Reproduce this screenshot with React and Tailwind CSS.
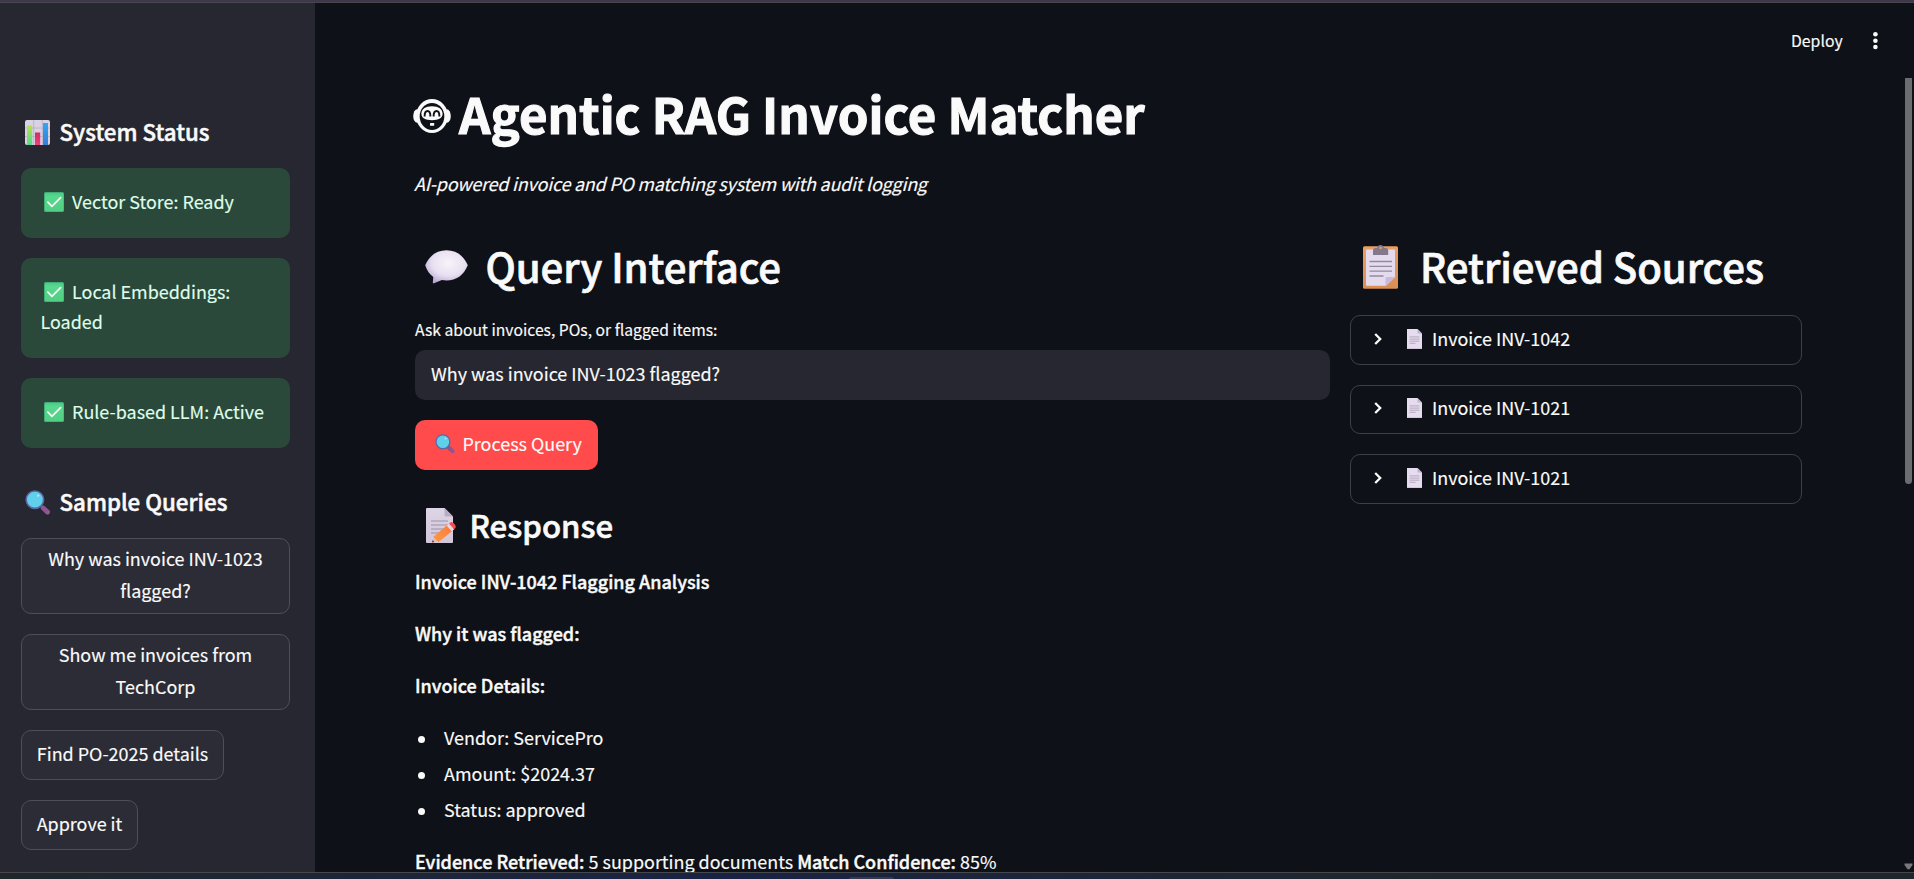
import React from "react";

function Gradients() {
  return (
    <svg className="absolute h-0 w-0" aria-hidden="true">
      <defs>
        <linearGradient id="barGreen" x1="0" y1="0" x2="0" y2="1">
          <stop offset="0" stopColor="#b6e34c" />
          <stop offset="1" stopColor="#54d98c" />
        </linearGradient>
        <linearGradient id="barPink" x1="0" y1="0" x2="0" y2="1">
          <stop offset="0" stopColor="#cf2f63" />
          <stop offset="1" stopColor="#f03e7c" />
        </linearGradient>
        <linearGradient id="barBlue" x1="0" y1="0" x2="0" y2="1">
          <stop offset="0" stopColor="#2fa8f4" />
          <stop offset="1" stopColor="#3a7bd5" />
        </linearGradient>
        <linearGradient id="checkBg" x1="0" y1="0" x2="0" y2="1">
          <stop offset="0" stopColor="#4fc98a" />
          <stop offset="0.2" stopColor="#57d98c" />
          <stop offset="1" stopColor="#52cf84" />
        </linearGradient>
        <linearGradient id="handle" x1="0" y1="0" x2="1" y2="1">
          <stop offset="0" stopColor="#6d4a8c" />
          <stop offset="1" stopColor="#a0609c" />
        </linearGradient>
        <radialGradient id="bubble" cx="0.55" cy="0.38" r="0.65">
          <stop offset="0" stopColor="#f8f3fa" />
          <stop offset="0.6" stopColor="#e8e0f1" />
          <stop offset="1" stopColor="#b9a8d6" />
        </radialGradient>
        <linearGradient id="paper" x1="0" y1="0" x2="0" y2="1">
          <stop offset="0" stopColor="#ddd5e6" />
          <stop offset="1" stopColor="#d3c6da" />
        </linearGradient>
        <linearGradient id="pencil" x1="1" y1="0" x2="0" y2="1">
          <stop offset="0" stopColor="#ff7a3c" />
          <stop offset="1" stopColor="#f99a45" />
        </linearGradient>
        <linearGradient id="board" x1="0" y1="0" x2="0" y2="1">
          <stop offset="0" stopColor="#e9a063" />
          <stop offset="1" stopColor="#da8f56" />
        </linearGradient>
      </defs>
    </svg>
  );
}

function ChartIcon() {
  return (
    <svg viewBox="0 0 25 25" className="mr-[9.5px] ml-1 inline h-[25px] w-[25px] align-[-4px]">
      <rect width="25" height="25" rx="2" fill="#d9d2e2" />
      <path d="M8.7 0v25M17.3 0v25M0 8h25M0 16.5h25" stroke="#b9b0c6" strokeWidth="0.9" />
      <rect x="2" y="5.5" width="5.2" height="19.5" fill="url(#barGreen)" />
      <rect x="10" y="12.5" width="5.2" height="12.5" fill="url(#barPink)" />
      <rect x="18" y="3" width="5" height="22" fill="url(#barBlue)" />
    </svg>
  );
}

function CheckIcon() {
  return (
    <svg viewBox="0 0 20 20" className="mr-2 ml-[3.5px] inline h-5 w-5 align-[-3px]">
      <rect width="20" height="20" rx="1.6" fill="#3fae78" />
      <rect x="1" y="1" width="18.4" height="18.2" rx="1" fill="url(#checkBg)" />
      <path d="M3.9 10.2l4 4.1L16.6 5.6" fill="none" stroke="#f6fbf8" strokeWidth="1.7" strokeLinecap="round" strokeLinejoin="round" />
    </svg>
  );
}

function LensIcon({ className }) {
  return (
    <svg viewBox="0 0 25 25" className={className}>
      <path d="M16.2 16.2l2.2 2" stroke="#5d6f9c" strokeWidth="2.4" />
      <path d="M18 17.8l4.4 4.2" stroke="url(#handle)" strokeWidth="4.8" strokeLinecap="round" />
      <path d="M18.2 17.9l3.8 3.7" stroke="#8d568f" strokeWidth="4.2" strokeLinecap="round" />
      <circle cx="9.9" cy="9.7" r="8.7" fill="#60cfec" stroke="#5a68a6" strokeWidth="1.6" />
      <circle cx="13.2" cy="5.6" r="1.2" fill="#b5e9f8" />
    </svg>
  );
}

function RobotIcon() {
  return (
    <svg viewBox="0 0 38 34" className="mr-[8.5px] -ml-[2.5px] inline h-[34px] w-[38px] align-[1px]">
      <ellipse cx="4.2" cy="17" rx="4" ry="6.8" fill="#fafafa" />
      <ellipse cx="33.8" cy="17" rx="4" ry="6.8" fill="#fafafa" />
      <ellipse cx="19" cy="17" rx="15.8" ry="17" fill="#fafafa" />
      <ellipse cx="19" cy="17.4" rx="12.3" ry="13.5" fill="#0e1117" />
      <path d="M19 7.2c6.8 0 10.6 2.9 10.6 7.6 0 4.3-3.9 6.4-10.6 6.4s-10.6-2.1-10.6-6.4c0-4.7 3.8-7.6 10.6-7.6z" fill="#fafafa" />
      <path d="M11.6 17.4c0-3.5 1.2-5.4 2.9-5.4s2.9 1.9 2.9 5.4M20.6 17.4c0-3.5 1.2-5.4 2.9-5.4s2.9 1.9 2.9 5.4" fill="none" stroke="#0e1117" strokeWidth="1.9" />
      <rect x="17" y="24" width="4.2" height="2.8" rx="0.6" fill="#fafafa" />
    </svg>
  );
}

function BubbleIcon() {
  return (
    <svg viewBox="0 0 43 34" className="mr-[18px] ml-[9.5px] inline h-[34px] w-[43px] align-[-1px]">
      <path d="M21.5 0.2C32 0.2 38.5 6 42.8 15.2 38.5 25.5 31.5 30.2 21.5 30.4c-1.7 0-3.2-.1-4.6-.3L9 33.3c-.8.3-1.3-.1-1.2-.9L8.3 27C4.6 24.4 2 20.5.2 15.2 4.5 6 11 0.2 21.5 0.2z" fill="url(#bubble)" />
    </svg>
  );
}

function MemoIcon() {
  return (
    <svg viewBox="0 0 30 35" className="mr-[13.5px] ml-[11px] inline h-[35px] w-[30px] align-[-5px]">
      <path d="M0 1Q0 0 1 0H18.5L27 8.5V34Q27 35 26 35H1Q0 35 0 34z" fill="url(#paper)" />
      <path d="M18.5 0L27 8.5H19.5Q18.5 8.5 18.5 7.5z" fill="#b9adc4" />
      <path d="M5 13h17M5 17h17M5 21h13M5 25h8" stroke="#9b91a5" strokeWidth="1.1" />
      <path d="M6 34.5l1.8-6.6 4.6 5.2z" fill="#e8c0a0" />
      <path d="M6 34.5l.7-2.5 1.7 1.9z" fill="#4c3350" />
      <path d="M7.4 28.7L20.8 17.6l5 5.7L12.3 34.2z" fill="url(#pencil)" />
      <path d="M20.8 17.6l2.5-2 5 5.7-2.5 2z" fill="#e3d9ea" />
      <path d="M23.1 15.7l1.7-1.4c1.5-1.2 6 3.6 4.8 5.1l-1.5 1.9z" fill="#f4504f" />
    </svg>
  );
}

function ClipboardIcon() {
  return (
    <svg viewBox="0 0 35 44" className="mr-[22px] ml-[13px] inline h-[44px] w-[35px] align-[-6px]">
      <rect y="1.2" width="35" height="42.6" rx="1.5" fill="url(#board)" />
      <path d="M3 5.5Q3 4.5 4 4.5H31Q32 4.5 32 5.5V32L23 40.8H4Q3 40.8 3 39.8z" fill="#e4dcee" />
      <path d="M32 32L22.5 41V33.5Q22.5 32 24 32z" fill="#c9b9dc" />
      <path d="M6.5 16.5h22.5M6.5 21.3h22.5M6.5 26.2h22.5M6.5 31h14" stroke="#93899c" strokeWidth="1.3" />
      <path d="M10 10V5.5Q10 3 12.5 3H14Q14.8 0 17.5 0T21 3H22.7Q25.2 3 25.2 5.5V10z" fill="#83798a" />
      <circle cx="17.6" cy="3" r="1.2" fill="#e0a070" />
    </svg>
  );
}

function PageIcon() {
  return (
    <svg viewBox="0 0 15 20" className="inline h-5 w-[15px] align-[-3px]">
      <path d="M0 0H10.5L15 4.5V20H0z" fill="#e6dcef" />
      <path d="M10.5 0L15 4.5H10.5z" fill="#c0b4cc" />
      <path d="M2.6 7.9h9.8M2.6 10.1h9.8M2.6 12.2h9.8M2.6 14.3h6" stroke="#b0a4ba" strokeWidth="0.9" />
      <path d="M0 19.6h15" stroke="#c9bdd3" strokeWidth="0.8" />
    </svg>
  );
}

const statuses = ["Vector Store: Ready", "Local Embeddings: Loaded", "Rule-based LLM: Active"];
const details = ["Vendor: ServicePro", "Amount: $2024.37", "Status: approved"];

function StatusCard({ children }) {
  return (
    <div className="rounded-[10px] bg-[#2a493b] pt-[18px] pr-5 pb-[22px] pl-[19.5px] leading-[30px] text-[#dffde9]">
      <CheckIcon />
      {children}
    </div>
  );
}

function SideHeading({ icon, children }) {
  return (
    <h3 className="text-[22.3px] leading-[30px] font-medium whitespace-nowrap [-webkit-text-stroke:0.5px_#fafafa]">
      {icon}
      {children}
    </h3>
  );
}

function Semi({ children }) {
  return <strong className="text-[18px] font-medium [-webkit-text-stroke:0.4px_#fafafa]">{children}</strong>;
}

function Expander({ className, label }) {
  return (
    <div className={className}>
      <svg viewBox="0 0 8 12" className="mr-[25px] ml-[23px] inline h-3 w-2 align-[1px]">
        <path d="M1.2 1l5 5-5 5" fill="none" stroke="#fafafa" strokeWidth="2.3" />
      </svg>
      <PageIcon />
      <span className="ml-[10px]">{label}</span>
    </div>
  );
}

export default function App() {
  return (
    <div className="relative flex h-[879px] w-[1914px] flex-col overflow-hidden bg-[#0e1117] font-['Noto_Sans_CJK_SC','Noto_Sans',sans-serif] text-[17.95px] text-[#fafafa] [-webkit-text-stroke:0.15px_currentColor]">
      <Gradients />
      <div className="h-[3px] shrink-0 border-b border-[#48474b] bg-[#40374f]" />

      <div className="flex h-[869px] shrink-0 overflow-hidden">
        <aside className="flex w-[315px] shrink-0 flex-col bg-[#262730] pt-[113px] pr-[25px] pl-[21px]">
          <SideHeading icon={<ChartIcon />}>System Status</SideHeading>
          <div className="mt-[22px] flex flex-col gap-5">
            {statuses.map((s) => (
              <StatusCard key={s}>{s}</StatusCard>
            ))}
          </div>
          <div className="mt-[38px]">
            <SideHeading icon={<LensIcon className="mr-[9.5px] ml-1 inline h-[25px] w-[25px] align-[-4px]" />}>
              Sample Queries
            </SideHeading>
          </div>
          <div className="mt-[22px] flex flex-col items-start gap-5 text-center leading-8">
            <button className="h-[76px] w-[269px] rounded-[10px] border border-[#4d4e56] bg-[#2b2c36] px-[15px] pt-[3px] pb-[7px]">
              Why was invoice INV-1023 flagged?
            </button>
            <button className="h-[76px] w-[269px] rounded-[10px] border border-[#4d4e56] bg-[#2b2c36] px-[15px] pt-[3px] pb-[7px]">
              Show me invoices from TechCorp
            </button>
            <button className="h-[50px] w-[203px] rounded-[10px] border border-[#4d4e56] bg-[#2b2c36] pt-[6px] pb-[10px] whitespace-nowrap">
              Find PO-2025 details
            </button>
            <button className="h-[50px] w-[117px] rounded-[10px] border border-[#4d4e56] bg-[#2b2c36] pt-[6px] pb-[10px] whitespace-nowrap">
              Approve it
            </button>
          </div>
        </aside>

        <main className="flex w-[1599px] shrink-0 flex-col pt-[76px] pl-[100px]">
          <h1 className="text-[49.15px] leading-[67px] font-bold whitespace-nowrap [-webkit-text-stroke:1.1px_#fafafa]">
            <RobotIcon />
            Agentic RAG Invoice Matcher
          </h1>
          <p className="mt-[22px] -ml-px leading-[30px] tracking-[-0.215px] whitespace-nowrap italic">
            AI-powered invoice and PO matching system with audit logging
          </p>

          <div className="mt-10 flex gap-5">
            <section className="w-[915px]">
              <h2 className="text-[40.15px] leading-[55px] font-medium tracking-[-0.06px] whitespace-nowrap [-webkit-text-stroke:0.7px_#fafafa]">
                <BubbleIcon />
                Query Interface
              </h2>
              <div className="mt-6 text-[15.7px] leading-[25px]">Ask about invoices, POs, or flagged items:</div>
              <div className="mt-2 h-[50px] rounded-[10px] bg-[#262730] px-4 pt-2 leading-[30px]">
                Why was invoice INV-1023 flagged?
              </div>
              <button className="mt-5 block h-[50px] w-[183px] rounded-[10px] bg-[#ff4b4b] pt-2 pb-3 pl-5 text-left leading-[30px] whitespace-nowrap">
                <LensIcon className="mr-[7.5px] inline h-5 w-5 align-[-3px]" />
                Process Query
              </button>
              <h3 className="mt-[33px] text-[31.2px] leading-[43px] font-medium whitespace-nowrap [-webkit-text-stroke:0.6px_#fafafa]">
                <MemoIcon />
                Response
              </h3>
              <div className="mt-5 flex flex-col gap-[22px] leading-[30px]">
                <p>
                  <Semi>Invoice INV-1042 Flagging Analysis</Semi>
                </p>
                <p>
                  <Semi>Why it was flagged:</Semi>
                </p>
                <p>
                  <Semi>Invoice Details:</Semi>
                </p>
                <ul className="flex flex-col gap-[6px]">
                  {details.map((d) => (
                    <li key={d} className="flex items-start">
                      <span className="mt-[13.5px] mr-[19px] ml-[3px] h-[7px] w-[7px] rounded-full bg-[#fafafa]" />
                      {d}
                    </li>
                  ))}
                </ul>
                <p className="whitespace-nowrap">
                  <Semi>Evidence Retrieved:</Semi> 5 supporting documents <Semi>Match Confidence:</Semi> 85%
                </p>
              </div>
            </section>

            <section className="w-[452px]">
              <h2 className="text-[40.15px] leading-[55px] font-medium tracking-[-0.06px] whitespace-nowrap [-webkit-text-stroke:0.7px_#fafafa]">
                <ClipboardIcon />
                Retrieved Sources
              </h2>
              <div className="mt-[22px] flex flex-col gap-5 leading-[30px]">
                <Expander className="h-[50px] rounded-[10px] border border-[#3e4046] pt-[7px]" label="Invoice INV-1042" />
                <Expander className="h-[49px] rounded-[10px] border border-[#3e4046] pt-[6px]" label="Invoice INV-1021" />
                <Expander className="h-[50px] rounded-[10px] border border-[#3e4046] pt-[7px]" label="Invoice INV-1021" />
              </div>
            </section>
          </div>
        </main>
      </div>

      <div className="flex h-[7px] shrink-0 items-end border-t border-[#47484c] bg-linear-to-r from-[#1f272b] via-[#1a2244] via-38% to-[#1f262b] to-75%">
        <div className="ml-[849px] h-[2px] w-[45px] rounded-t-[2px] bg-[#373a4c]" />
      </div>

      <div className="absolute top-[28px] left-[1791px] text-[15.8px] leading-[25px]">Deploy</div>
      <svg viewBox="0 0 6 20" className="absolute top-[31px] left-[1872px] h-5 w-1.5">
        <circle cx="3.4" cy="3.3" r="2.3" fill="#fafafa" />
        <circle cx="3.4" cy="9.7" r="2.3" fill="#fafafa" />
        <circle cx="3.4" cy="16" r="2.3" fill="#fafafa" />
      </svg>
      <div className="absolute top-[78px] left-[1905px] h-[406px] w-[7px] rounded-b-[4px] bg-[#6b6c6f]" />
      <svg viewBox="0 0 9 7" className="absolute top-[863px] left-[1904px] h-[7px] w-[9px]">
        <path d="M0.5 0.5h8v1.5L5.5 6.2h-2L0.5 2z" fill="#77787b" />
      </svg>
    </div>
  );
}
